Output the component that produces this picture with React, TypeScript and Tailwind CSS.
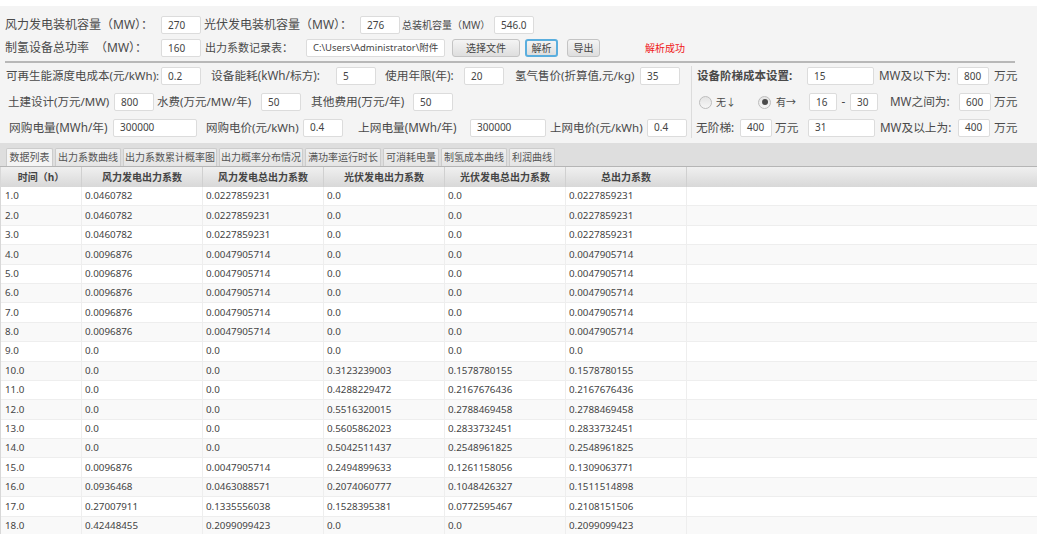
import type { ReactNode } from "react";

const font = "font-['Noto_Sans','Noto_Sans_CJK_SC',sans-serif]";

const tabs = [
  { name: "数据列表", w: "w-[47px]" },
  { name: "出力系数曲线", w: "w-[66px]" },
  { name: "出力系数累计概率图", w: "w-[94px]" },
  { name: "出力概率分布情况", w: "w-[84px]" },
  { name: "满功率运行时长", w: "w-[76px]" },
  { name: "可消耗电量", w: "w-[56px]" },
  { name: "制氢成本曲线", w: "w-[66px]" },
  { name: "利润曲线", w: "w-[46px]" },
];

const columns = ["时间（h）", "风力发电出力系数", "风力发电总出力系数", "光伏发电出力系数", "光伏发电总出力系数", "总出力系数"];

const rows = [
  ["1.0", "0.0460782", "0.0227859231", "0.0", "0.0", "0.0227859231"],
  ["2.0", "0.0460782", "0.0227859231", "0.0", "0.0", "0.0227859231"],
  ["3.0", "0.0460782", "0.0227859231", "0.0", "0.0", "0.0227859231"],
  ["4.0", "0.0096876", "0.0047905714", "0.0", "0.0", "0.0047905714"],
  ["5.0", "0.0096876", "0.0047905714", "0.0", "0.0", "0.0047905714"],
  ["6.0", "0.0096876", "0.0047905714", "0.0", "0.0", "0.0047905714"],
  ["7.0", "0.0096876", "0.0047905714", "0.0", "0.0", "0.0047905714"],
  ["8.0", "0.0096876", "0.0047905714", "0.0", "0.0", "0.0047905714"],
  ["9.0", "0.0", "0.0", "0.0", "0.0", "0.0"],
  ["10.0", "0.0", "0.0", "0.3123239003", "0.1578780155", "0.1578780155"],
  ["11.0", "0.0", "0.0", "0.4288229472", "0.2167676436", "0.2167676436"],
  ["12.0", "0.0", "0.0", "0.5516320015", "0.2788469458", "0.2788469458"],
  ["13.0", "0.0", "0.0", "0.5605862023", "0.2833732451", "0.2833732451"],
  ["14.0", "0.0", "0.0", "0.5042511437", "0.2548961825", "0.2548961825"],
  ["15.0", "0.0096876", "0.0047905714", "0.2494899633", "0.1261158056", "0.1309063771"],
  ["16.0", "0.0936468", "0.0463088571", "0.2074060777", "0.1048426327", "0.1511514898"],
  ["17.0", "0.27007911", "0.1335556038", "0.1528395381", "0.0772595467", "0.2108151506"],
  ["18.0", "0.42448455", "0.2099099423", "0.0", "0.0", "0.2099099423"],
];

function Label({ className = "", size = "text-[11.7px]", children }: { className?: string; size?: string; children: ReactNode }) {
  return <span className={`shrink-0 whitespace-nowrap text-[#4a4a4a] ${size} ${className}`}>{children}</span>;
}

function Box({ className = "", size = "text-[10px]", value }: { className?: string; size?: string; value: string }) {
  return (
    <div className={`flex h-[18px] shrink-0 items-center overflow-hidden whitespace-nowrap rounded-[2px] border border-[#dcdcdc] bg-white pl-[6px] text-[#444] ${size} ${className}`}>
      {value}
    </div>
  );
}

function Btn({ className = "", children }: { className?: string; children: ReactNode }) {
  return (
    <div className={`flex h-[18px] shrink-0 items-center justify-center rounded-[3px] bg-gradient-to-b from-[#f4f4f4] to-[#dedede] text-[10px] text-[#444] ${className}`}>
      {children}
    </div>
  );
}

function Radio({ checked }: { checked?: boolean }) {
  return (
    <div className="flex h-[13px] w-[13px] shrink-0 items-center justify-center rounded-full border border-[#bdbdbd] bg-gradient-to-b from-[#e4e4e4] to-[#f6f6f6]">
      {checked && <div className="h-[6px] w-[6px] rounded-full bg-[#4a4a4a]" />}
    </div>
  );
}

export default function App() {
  return (
    <div className={`flex h-[534px] w-[1037px] flex-col overflow-hidden bg-white ${font}`}>
      <div className="mt-[6px] h-[137px] shrink-0 bg-[#f4f4f4]">
        {/* 第一行 */}
        <div className="mt-[10px] flex h-[18px] items-center pl-[5px]">
          <Label className="w-[156px]" size="text-[12px]">风力发电装机容量（MW）：</Label>
          <Box className="w-[40px]" value="270" />
          <Label className="ml-[3px] w-[156px]" size="text-[12px]">光伏发电装机容量（MW）：</Label>
          <Box className="w-[40px]" value="276" />
          <Label className="ml-[2px] w-[92px]" size="text-[10px]">总装机容量（MW）</Label>
          <Box className="w-[40px]" value="546.0" />
        </div>
        {/* 第二行 */}
        <div className="mt-[5px] flex h-[18px] items-center pl-[5px]">
          <Label className="w-[156px]" size="text-[12px]">制氢设备总功率　（MW）：</Label>
          <Box className="w-[40px]" value="160" />
          <Label className="ml-[4px] w-[101px]" size="text-[11px]">出力系数记录表：</Label>
          <Box className="w-[139px]" size="text-[9.5px]" value="C:\Users\Administrator\附件" />
          <Btn className="ml-[7px] w-[68px] border border-[#c4c4c4]">选择文件</Btn>
          <Btn className="ml-[5px] w-[33px] border-2 border-[#5aaede]">解析</Btn>
          <Btn className="ml-[9px] w-[33px] border border-[#c4c4c4]">导出</Btn>
          <span className="ml-[45px] text-[10px] text-[#f01818]">解析成功</span>
        </div>
        <div className="ml-[5px] mt-[4px] h-[2px] w-[1010px] bg-[#b8b8b8]" />

        <div className="mt-[3px] flex">
          {/* 参数区 */}
          <div className="h-[72px] w-[692px] shrink-0 border-r border-[#dcdcdc] pt-[1px]">
            <div className="flex h-[18px] items-center pl-[6px]">
              <Label className="w-[155px]" size="text-[11.5px]">可再生能源度电成本(元/kWh):</Label>
              <Box className="w-[40px]" value="0.2" />
              <Label className="ml-[10px] w-[125px]">设备能耗(kWh/标方):</Label>
              <Box className="w-[40px]" value="5" />
              <Label className="ml-[9px] w-[79px]">使用年限(年):</Label>
              <Box className="w-[40px]" value="20" />
              <Label className="ml-[11px] w-[125px]" size="text-[11.5px]">氢气售价(折算值,元/kg)</Label>
              <Box className="w-[40px]" value="35" />
            </div>
            <div className="mt-[8px] flex h-[18px] items-center pl-[8px]">
              <Label className="w-[106px]" size="text-[11.5px]">土建设计(万元/MW)</Label>
              <Box className="w-[40px]" value="800" />
              <Label className="ml-[3px] w-[104px]" size="text-[11.5px]">水费(万元/MW/年)</Label>
              <Box className="w-[40px]" value="50" />
              <Label className="ml-[10px] w-[102px]">其他费用(万元/年)</Label>
              <Box className="w-[40px]" value="50" />
            </div>
            <div className="mt-[7px] flex h-[19px] items-center pl-[9px]">
              <Label className="w-[104px]">网购电量(MWh/年)</Label>
              <Box className="w-[84px]" value="300000" />
              <Label className="ml-[9px] w-[97px]" size="text-[11.5px]">网购电价(元/kWh)</Label>
              <Box className="w-[40px]" value="0.4" />
              <Label className="ml-[15px] w-[112px]">上网电量(MWh/年)</Label>
              <Box className="w-[76px]" value="300000" />
              <Label className="ml-[4px] w-[97px]" size="text-[11.5px]">上网电价(元/kWh)</Label>
              <Box className="w-[40px]" value="0.4" />
            </div>
          </div>

          {/* 阶梯成本 */}
          <div className="w-[345px] pt-[1px]">
            <div className="flex h-[18px] items-center pl-[5px]">
              <Label className="w-[110px] font-bold" size="text-[11.5px]">设备阶梯成本设置:</Label>
              <Box className="w-[67px]" value="15" />
              <Label className="ml-[5px] w-[78px]">MW及以下为:</Label>
              <Box className="w-[32px]" value="800" />
              <Label className="ml-[5px]">万元</Label>
            </div>
            <div className="mt-[8px] flex h-[18px] items-center pl-[7px]">
              <Radio />
              <Label className="ml-[4px] w-[42px]" size="text-[10px]">无↓</Label>
              <Radio checked />
              <Label className="ml-[5px] w-[33px]" size="text-[10px]">有→</Label>
              <Box className="w-[28px]" value="16" />
              <Label className="w-[13px] text-center">-</Label>
              <Box className="w-[28px]" value="30" />
              <Label className="ml-[12px] w-[69px]">MW之间为:</Label>
              <Box className="w-[32px]" value="600" />
              <Label className="ml-[3px]">万元</Label>
            </div>
            <div className="mt-[7px] flex h-[19px] items-center pl-[4px]">
              <Label className="w-[44px]">无阶梯:</Label>
              <Box className="w-[32px]" value="400" />
              <Label className="ml-[3px] w-[33px]">万元</Label>
              <Box className="w-[67px]" value="31" />
              <Label className="ml-[5px] w-[78px]">MW及以上为:</Label>
              <Box className="w-[32px]" value="400" />
              <Label className="ml-[4px]">万元</Label>
            </div>
          </div>
        </div>
      </div>

      {/* 标签页 */}
      <div className="flex h-[24px] shrink-0 items-end gap-[2px] border-b border-[#b5b5b5] bg-[#dedede] pl-[6px]">
        {tabs.map((tab, i) => (
          <div
            key={tab.name}
            className={`flex h-[18px] shrink-0 items-center justify-center rounded-t-[2px] border border-b-0 border-[#cccccc] text-[10px] text-[#555] ${tab.w} ${i === 0 ? "bg-[#f4f4f4]" : "bg-gradient-to-b from-[#f0f0f0] to-[#e4e4e4]"}`}
          >
            {tab.name}
          </div>
        ))}
      </div>

      {/* 数据表 */}
      <div className="flex-1 border-l border-[#d8d8d8]">
        <div className="flex h-[20px] bg-gradient-to-b from-[#f0f0f0] to-[#d8d8d8]">
          {columns.map((col, i) => (
            <div
              key={col}
              className={`flex shrink-0 items-center justify-center border-r border-[#d0d0d0] text-[10px] font-bold text-[#444] ${i === 0 ? "w-[81px]" : "w-[121px]"}`}
            >
              {col}
            </div>
          ))}
        </div>
        {rows.map((row, r) => (
          <div key={row[0]} className={`flex h-[19.4px] border-b border-[#eeeeee] ${r % 2 === 0 ? "bg-white" : "bg-[#f9f9f9]"}`}>
            {row.map((cell, i) => (
              <div
                key={i}
                className={`flex shrink-0 items-center border-r border-[#eeeeee] pt-[1px] text-[9.8px] text-[#444] ${i === 0 ? "w-[81px] pl-[4px]" : "w-[121px] pl-[3px]"}`}
              >
                {cell}
              </div>
            ))}
          </div>
        ))}
      </div>
    </div>
  );
}
